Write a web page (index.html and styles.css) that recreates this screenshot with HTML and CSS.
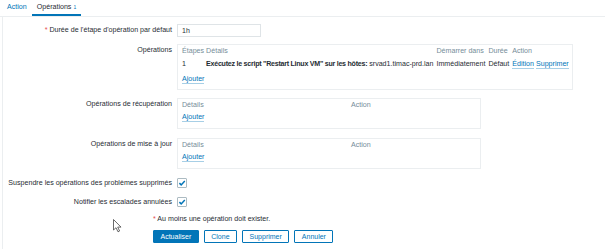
FILE: index.html
```html
<!DOCTYPE html>
<html lang="fr">
<head>
  <meta charset="UTF-8">
  <title>Opérations</title>
  <link rel="stylesheet" href="styles.css">
</head>
<body>
<div class="tabs">
  <a class="tab">Action</a>
  <a class="tab active">Opérations <sup class="count">1</sup></a>
</div>

<div class="panel">
  <div class="form">
    <label class="label tight-2"><span class="req">*</span> Durée de l'étape d'opération par défaut</label>
    <input class="input tight-2" type="text" value="1h">

    <label class="label tight-1">Opérations</label>
    <div class="box box-ops tight-1">
      <table class="ops">
        <tr class="head">
          <td>Étapes</td>
          <td>Détails</td>
          <td>Démarrer dans</td>
          <td>Durée</td>
          <td>Action</td>
        </tr>
        <tr class="row">
          <td>1</td>
          <td><b>Exécutez le script "Restart Linux VM" sur les hôtes:</b> srvad1.timac-prd.lan</td>
          <td>Immédiatement</td>
          <td>Défaut</td>
          <td><a class="link">Édition</a> <a class="link">Supprimer</a></td>
        </tr>
        <tr class="add">
          <td colspan="5"><a class="link">Ajouter</a></td>
        </tr>
      </table>
    </div>

    <label class="label">Opérations de récupération</label>
    <div class="box box-small">
      <div class="cols head">
        <span>Détails</span>
        <span>Action</span>
      </div>
      <div class="add"><a class="link">Ajouter</a></div>
    </div>

    <label class="label">Opérations de mise à jour</label>
    <div class="box box-small">
      <div class="cols head">
        <span>Détails</span>
        <span>Action</span>
      </div>
      <div class="add"><a class="link">Ajouter</a></div>
    </div>

    <label class="label label-check">Suspendre les opérations des problèmes supprimés</label>
    <span class="check">
      <svg width="10" height="10" viewBox="0 0 10 10"><path d="M2.4 5.1 L4.2 6.9 L7.8 3.1" fill="none" stroke="#0275b8" stroke-width="1.5"/></svg>
    </span>

    <label class="label label-check">Notifier les escalades annulées</label>
    <span class="check">
      <svg width="10" height="10" viewBox="0 0 10 10"><path d="M2.4 5.1 L4.2 6.9 L7.8 3.1" fill="none" stroke="#0275b8" stroke-width="1.5"/></svg>
    </span>
  </div>

  <div class="footer">
    <p class="message"><span class="req">*</span> Au moins une opération doit exister.</p>
    <div class="buttons">
      <button class="btn btn-primary">Actualiser</button>
      <button class="btn">Clone</button>
      <button class="btn">Supprimer</button>
      <button class="btn">Annuler</button>
    </div>
  </div>
</div>

<svg class="cursor" width="10" height="14" viewBox="0 0 10 14">
  <path d="M0.5 0.5 L0.5 11 L3 8.7 L5 12.8 L6.6 12 L4.7 8.1 L8 8.1 Z" fill="#fff" stroke="#444" stroke-width="0.8"/>
</svg>
</body>
</html>
```

FILE: styles.css
```css
* {
  margin: 0;
  padding: 0;
  box-sizing: border-box;
}

body {
  font-family: 'Liberation Sans', Arial, sans-serif;
  font-size: 7.1px;
  color: #1f2c33;
  background: #fff;
  position: relative;
}

.tabs {
  display: flex;
  height: 17px;
  padding-left: 2px;
  border-bottom: 1px solid #ebeef0;
}

.tab {
  padding: 0 5px;
  height: 16px;
  line-height: 14px;
  color: #0275b8;
  border-bottom: 2px solid transparent;
}

.tab.active {
  color: #1f2c33;
  border-bottom-color: #0275b8;
}

.count {
  font-size: 5px;
  color: #0275b8;
  vertical-align: baseline;
}

.panel {
  margin-left: 2px;
  border-left: 1px solid #ebeef0;
  padding-top: 7px;
  padding-bottom: 6px;
}

.form {
  display: grid;
  grid-template-columns: 169px auto;
  column-gap: 5px;
  row-gap: 9px;
  justify-items: start;
  align-items: start;
}

/* the first rows sit a little closer together */
.tight-2 {
  margin-bottom: -2px;
}

.tight-1 {
  margin-bottom: -1px;
}

.label {
  justify-self: end;
  line-height: 13px;
  white-space: nowrap;
}

.label-check {
  line-height: 10px;
}

.req {
  color: #e54e4e;
}

.input {
  width: 84px;
  height: 13px;
  border: 1px solid #dfe4e7;
  padding: 0 4px;
  font-family: inherit;
  font-size: 7px;
  color: #1f2c33;
  outline: none;
}

.box {
  border: 1px solid #ebeef0;
  padding: 2px 4px 3px;
}

.box-ops {
  width: 396px;
}

.box-small {
  width: 304px;
  padding-bottom: 4px;
}

.head {
  color: #768d99;
}

.ops {
  border-collapse: collapse;
  white-space: nowrap;
}

.ops td {
  padding: 0 3px 0 0;
}

.ops td:first-child {
  padding-right: 2px;
}

.ops b {
  letter-spacing: -0.26px;
}

.ops .head td {
  height: 9px;
  line-height: 9px;
}

.ops .row td {
  height: 16px;
  line-height: 16px;
}

.ops .add td {
  height: 14px;
  line-height: 14px;
}

.cols {
  display: grid;
  grid-template-columns: 169px 1fr;
  line-height: 9px;
}

.box-small .add {
  line-height: 14px;
}

.link {
  color: #0275b8;
  border-bottom: 1px solid rgba(2, 117, 184, 0.35);
}

.check {
  width: 10px;
  height: 10px;
  border: 1px solid #acbbc2;
  border-radius: 1px;
  display: flex;
  align-items: center;
  justify-content: center;
}

.check svg {
  flex: none;
}

.footer {
  padding-left: 150px;
  margin-top: 8px;
}

.message {
  line-height: 9px;
}

.buttons {
  display: flex;
  gap: 5px;
  margin-top: 6px;
}

.btn {
  height: 13px;
  padding: 0 6.5px;
  font-family: inherit;
  font-size: 7px;
  color: #0275b8;
  background: #fff;
  border: 1px solid #0275b8;
  border-radius: 1px;
}

.btn-primary {
  background: #0275b8;
  color: #fff;
}

.cursor {
  position: absolute;
  left: 113px;
  top: 219px;
}
```
